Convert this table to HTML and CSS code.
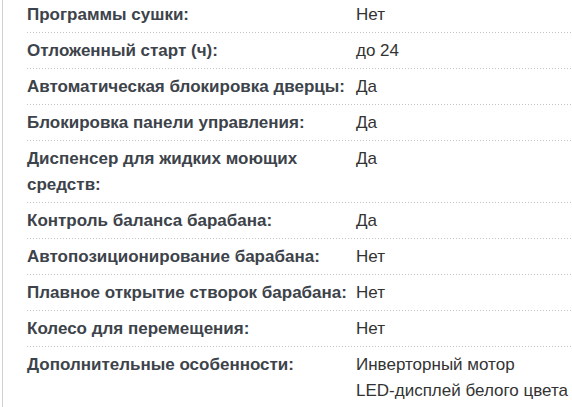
FILE: index.html
```html
<!DOCTYPE html>
<html lang="ru">
<head>
<meta charset="utf-8">
<link rel="stylesheet" href="styles.css">
</head>
<body>
<div class="panel">
  <dl class="specs">
    <div class="row"><dt>Программы сушки:</dt><dd>Нет</dd></div>
    <div class="row"><dt>Отложенный старт (ч):</dt><dd>до 24</dd></div>
    <div class="row"><dt>Автоматическая блокировка дверцы:</dt><dd>Да</dd></div>
    <div class="row"><dt>Блокировка панели управления:</dt><dd>Да</dd></div>
    <div class="row"><dt>Диспенсер для жидких моющих средств:</dt><dd>Да</dd></div>
    <div class="row"><dt>Контроль баланса барабана:</dt><dd>Да</dd></div>
    <div class="row"><dt>Автопозиционирование барабана:</dt><dd>Нет</dd></div>
    <div class="row"><dt>Плавное открытие створок барабана:</dt><dd>Нет</dd></div>
    <div class="row"><dt>Колесо для перемещения:</dt><dd>Нет</dd></div>
    <div class="row last"><dt>Дополнительные особенности:</dt><dd>Инверторный мотор<br>LED-дисплей белого цвета</dd></div>
  </dl>
</div>
</body>
</html>
```

FILE: styles.css
```css
html, body {
  margin: 0;
  padding: 0;
  background: #fff;
}
body {
  font-family: "Liberation Sans", Arial, sans-serif;
  font-size: 17px;
  line-height: 26px;
  overflow: hidden;
}
.panel {
  margin-left: 2px;
  border-left: 1px solid #d0d0d0;
  min-height: 407px;
  padding-left: 24px;
  margin-top: -3px;
}
.specs {
  margin: 0;
}
.row {
  display: flex;
  padding: 5px 0 5px;
  background-image: linear-gradient(to right, #c4c4c4 1px, transparent 1px);
  background-size: 3px 1px;
  background-repeat: repeat-x;
  background-position: 0 100%;
}
.row.last {
  background-image: none;
}
dt {
  width: 329px;
  flex: none;
  font-weight: bold;
  color: #3d434a;
  padding-right: 4px;
  box-sizing: border-box;
}
dd {
  margin: 0;
  color: #333;
}
```
